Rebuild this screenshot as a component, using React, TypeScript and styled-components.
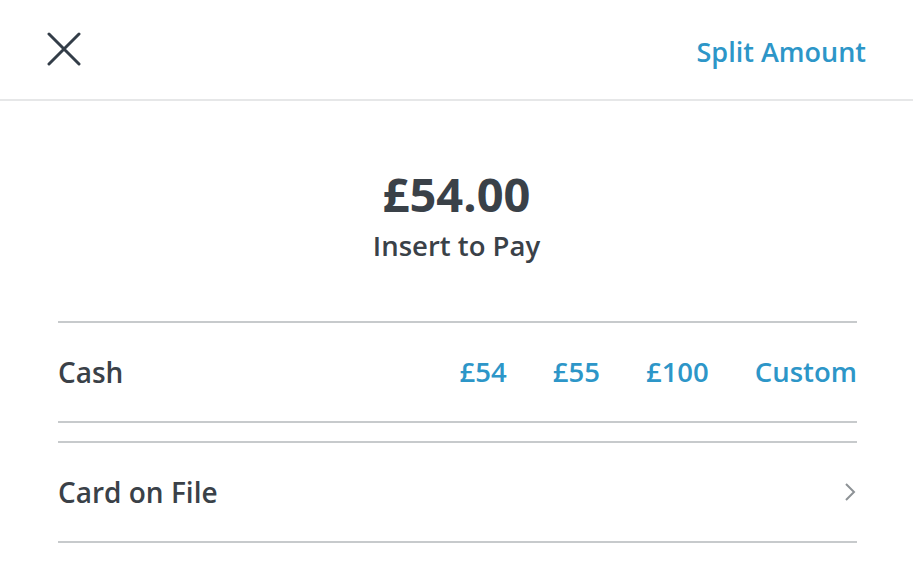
import styled, { createGlobalStyle } from 'styled-components';

const Global = createGlobalStyle`
  html, body {
    margin: 0;
    padding: 0;
    background: #ffffff;
    font-family: "Open Sans", "Liberation Sans", sans-serif;
  }
`;

const Page = styled.div`
  width: 913px;
  height: 586px;
  background: #fff;
  overflow: hidden;
`;

const Header = styled.div`
  height: 99px;
  border-bottom: 2px solid #e6e7e8;
  display: flex;
  align-items: center;
  justify-content: space-between;
  padding: 0 47px 0 46px;
`;

const CloseButton = styled.button`
  border: 0;
  background: none;
  padding: 0;
  width: 36px;
  height: 36px;
  display: flex;
  align-items: center;
  justify-content: center;
  margin-top: -2px;
`;

const LinkText = styled.span`
  color: #2d96c8;
  font-weight: 600;
  font-size: 27.5px;
`;

const HeaderLink = styled(LinkText)`
  font-size: 27px;
  margin-top: 4px;
`;

const Total = styled.div`
  display: flex;
  flex-direction: column;
  align-items: center;
  padding-top: 62px;
  height: 157px;
  box-sizing: border-box;
`;

const Amount = styled.div`
  color: #3a4148;
  font-weight: 700;
  font-size: 47px;
  line-height: 62px;
`;

const Subtitle = styled.div`
  color: #3a4148;
  font-weight: 600;
  font-size: 27.5px;
  line-height: 36px;
  margin-top: 3px;
`;

const Section = styled.div`
  margin: 63px 56px 0 58px;
  display: flex;
  flex-direction: column;
  gap: 18px;
`;

const Row = styled.div`
  height: 98px;
  border-top: 2px solid #c7cacc;
  border-bottom: 2px solid #c7cacc;
  display: flex;
  align-items: center;
  justify-content: space-between;
`;

const Label = styled.span`
  color: #3a4148;
  font-weight: 600;
  font-size: 28px;
`;

const Options = styled.div`
  display: flex;
  gap: 46px;
  margin-top: -2px;
`;

const Chevron = () => (
  <svg width="14" height="20" viewBox="0 0 14 20">
    <path d="M3 2 L11 10 L3 18" fill="none" stroke="#8d9296" strokeWidth="2" />
  </svg>
);

const CloseIcon = () => (
  <svg width="34" height="34" viewBox="0 0 34 34">
    <path d="M2 2 L32 32 M32 2 L2 32" stroke="#333d48" strokeWidth="3" strokeLinecap="round" />
  </svg>
);

export default function App() {
  return (
    <Page>
      <Global />
      <Header>
        <CloseButton>
          <CloseIcon />
        </CloseButton>
        <HeaderLink>Split Amount</HeaderLink>
      </Header>
      <Total>
        <Amount>£54.00</Amount>
        <Subtitle>Insert to Pay</Subtitle>
      </Total>
      <Section>
        <Row>
          <Label>Cash</Label>
          <Options>
            <LinkText>£54</LinkText>
            <LinkText>£55</LinkText>
            <LinkText>£100</LinkText>
            <LinkText>Custom</LinkText>
          </Options>
        </Row>
        <Row>
          <Label>Card on File</Label>
          <Chevron />
        </Row>
      </Section>
    </Page>
  );
}
